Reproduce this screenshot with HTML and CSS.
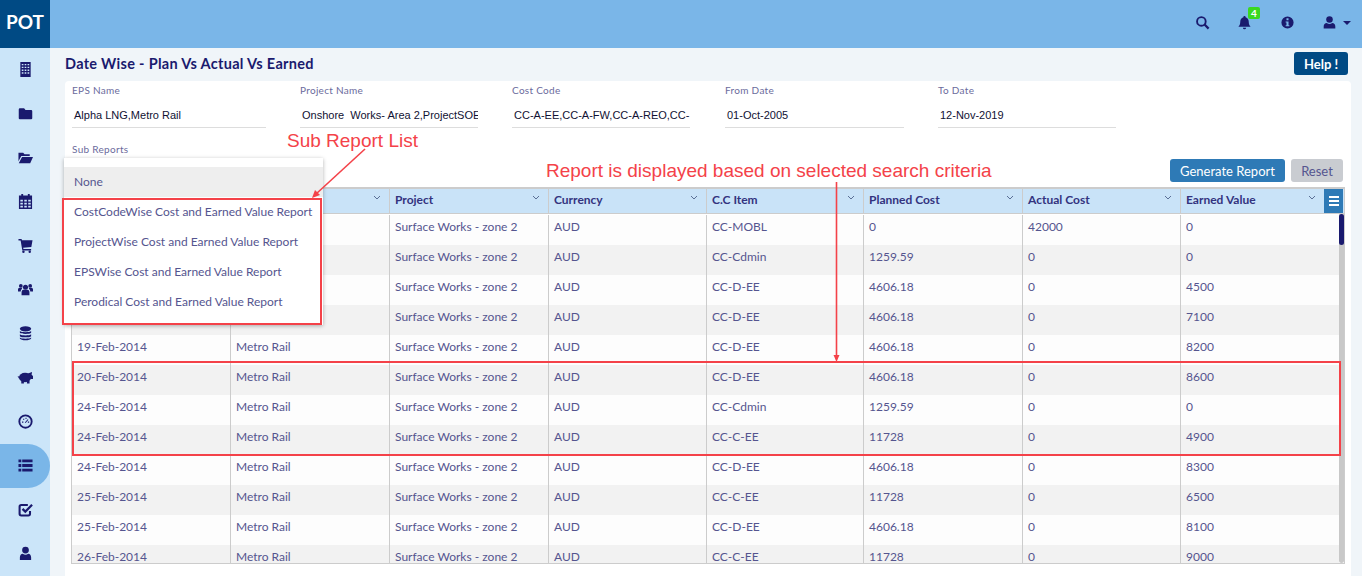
FILE: index.html
```html
<!DOCTYPE html>
<html>

<head>
    <meta charset="utf-8">
    <title>Date Wise - Plan Vs Actual Vs Earned</title>
    <link rel="stylesheet" href="styles.css">
</head>

<body>

    <svg class="sprite" width="0" height="0">
        <symbol id="i-chev" viewBox="0 0 8 5"><path d="M1 1l3 3 3-3" fill="none" stroke="#5a6f96" stroke-width="1"/></symbol>
    </svg>

    <header class="topbar">
        <div class="logo">POT</div>
        <div class="top-icons">
            <svg class="top-icon" viewBox="0 0 16 16"><circle cx="6.8" cy="6.8" r="4.6" fill="none" stroke="#1a1a6e" stroke-width="2"/><path d="M10.2 10.2l4.3 4.3" stroke="#1a1a6e" stroke-width="2.4"/></svg>
            <div class="bell">
                <svg class="top-icon" viewBox="0 0 16 16"><path d="M8 1a1.2 1.2 0 0 1 1.2 1.3C11.500 2.900 12.500 4.800 12.500 7c0 3 .8 4.300 2 5.500H1.500c1.200-1.200 2-2.500 2-5.500 0-2.200 1-4.100 3.300-4.700A1.200 1.200 0 0 1 8 1zM6.300 13.500h3.400a1.700 1.700 0 0 1-3.400 0z" fill="#1a1a6e"/></svg>
                <span class="badge">4</span>
            </div>
            <svg class="top-icon" viewBox="0 0 16 16"><path fill-rule="evenodd" d="M8 1.500a6.500 6.500 0 1 1 0 13 6.500 6.500 0 0 1 0-13zM6.900 3.500v2.100h2.200V3.500zM6 6.800v1.300h.9v2.700H6v1.300h4v-1.300h-.9V6.800z" fill="#1a1a6e"/></svg>
            <div class="user-menu">
                <svg class="top-icon" viewBox="0 0 16 16"><circle cx="8" cy="4.800" r="3.500" fill="#1a1a6e"/><path d="M1.800 14.500v-2.300c0-2.200 1.400-3.700 3.300-3.700.8.600 1.800 1 2.900 1s2.100-.4 2.900-1c1.900 0 3.300 1.500 3.300 3.700v2.300z" fill="#1a1a6e"/></svg>
                <span class="caret"></span>
            </div>
        </div>
    </header>

    <div class="layout">

        <nav class="sidebar">
            <a class="nav-item"><svg viewBox="0 0 16 16"><path fill-rule="evenodd" d="M2.500 0h11v16h-11zM4 2v1.500h1.800V2zM7.100 2v1.500h1.800V2zM10.200 2v1.500H12V2zM4 5v1.500h1.800V5zM7.100 5v1.500h1.800V5zM10.200 5v1.500H12V5zM4 8v1.500h1.800V8zM7.100 8v1.500h1.800V8zM10.200 8v1.500H12V8zM4 11v1.500h1.800V11zM7.100 11v1.500h1.800V11zM10.200 11v1.500H12V11z"/></svg></a>
            <a class="nav-item"><svg viewBox="0 0 16 16"><path d="M2 2.500h4.500L8 4.300H14a1.200 1.200 0 0 1 1.200 1.200V13a1.200 1.200 0 0 1-1.200 1.200H2A1.200 1.200 0 0 1 .8 13V3.700A1.200 1.200 0 0 1 2 2.500z"/></svg></a>
            <a class="nav-item"><svg viewBox="0 0 16 16"><path d="M.5 3h5L7 4.500h5.500V6.500H3.500L.5 12zM4.300 7.500H16L13 14H.8z"/></svg></a>
            <a class="nav-item"><svg viewBox="0 0 16 16"><path fill-rule="evenodd" d="M3.500 0h2v1.500h5V0h2v1.500H15V16H1V1.500h2.500zM2.500 6v2h2.700V6zM6.700 6v2h2.700V6zM10.900 6v2h2.700V6zM2.500 9.200v2h2.700v-2zM6.700 9.200v2h2.700v-2zM10.900 9.200v2h2.700v-2zM2.500 12.400v2h2.700v-2zM6.700 12.400v2h2.700v-2zM10.900 12.400v2h2.700v-2z"/></svg></a>
            <a class="nav-item"><svg viewBox="0 0 16 16"><path d="M.5 1h3.300l.4 1.500H15.500l-1.300 7-8.700.8.300 1.300H14V13.200H4.600L2.800 2.700H.5z"/><circle cx="5.800" cy="14.700" r="1.300"/><circle cx="12.500" cy="14.700" r="1.300"/></svg></a>
            <a class="nav-item"><svg viewBox="0 0 16 16"><circle cx="8" cy="5.500" r="2.700"/><circle cx="3" cy="4.200" r="2"/><circle cx="13" cy="4.200" r="2"/><path d="M3.800 14v-3c0-2 1.200-2.800 2-2.800h4.400c.8 0 2 .8 2 2.800v3zM0 10V8C0 7 .8 6.500 1.700 6.500h2.400l.3.700C3.500 8 2.900 9 2.900 10zM16 10V8c0-1-.8-1.500-1.700-1.500h-2.400l-.3.700c.9.800 1.500 1.800 1.500 2.800z"/></svg></a>
            <a class="nav-item"><svg viewBox="0 0 16 16"><ellipse cx="8" cy="3" rx="6" ry="2.800"/><path d="M2 5.300C3 7 13 7 14 5.300V7.300C13 9 3 9 2 7.300zM2 8.800C3 10.500 13 10.500 14 8.800V10.800C13 12.500 3 12.500 2 10.800zM2 12.200C3 13.900 13 13.900 14 12.200V13.200C13 15.800 3 15.800 2 13.200z"/></svg></a>
            <a class="nav-item"><svg viewBox="0 0 16 16"><ellipse cx="7.500" cy="8" rx="6.500" ry="5"/><path d="M-.5 6.500l2.800 1-1 2zM3.500 11h2.800v3.500H3.500zM9.500 11h2.800v3.500H9.500zM10.500 3.800l4.500-1.800-.5 3 1.500 1.500v3h-2.500z"/></svg></a>
            <a class="nav-item"><svg viewBox="0 0 16 16"><circle cx="8" cy="8" r="6.600" fill="none" stroke="#1a1a6e" stroke-width="2"/><path d="M7.300 9l3-3.500.8.700-3 3.500zM4.300 8h1.400v1.200H4.300zM5.400 5h1.300v1.200H5.400zM8 4h1.100v1.200H8zM10.500 8h1.400v1.200h-1.400z"/></svg></a>
            <a class="nav-item nav-active"><svg viewBox="0 0 16 16"><path d="M.5 1.500h3v3h-3zM4.500 1.500h11v3h-11zM.5 6.500h3v3h-3zM4.500 6.500h11v3h-11zM.5 11.500h3v3h-3zM4.500 11.500h11v3h-11z"/></svg></a>
            <a class="nav-item"><svg viewBox="0 0 16 16"><path d="M12.800 9.500V12.500a1.800 1.800 0 0 1-1.800 1.800H3.500A1.800 1.800 0 0 1 1.700 12.500V5A1.800 1.800 0 0 1 3.500 3.200h7" fill="none" stroke="#1a1a6e" stroke-width="2.200"/><path d="M4.800 7.300l3 3L15 3" fill="none" stroke="#1a1a6e" stroke-width="2.400"/></svg></a>
            <a class="nav-item"><svg viewBox="0 0 16 16"><circle cx="8" cy="4.300" r="3.600"/><path d="M2 15v-2.800c0-2.200 1.300-3.900 3.100-3.900.8.600 1.800 1 2.900 1s2.100-.4 2.900-1c1.800 0 3.100 1.700 3.100 3.900V15z"/></svg></a>
        </nav>

        <main class="content">

            <div class="title-row">
                <h1>Date Wise - Plan Vs Actual Vs Earned</h1>
                <button type="button" class="btn btn-help">Help !</button>
            </div>

            <section class="card">

                <div class="filters">
                    <div class="field field-eps"><label>EPS Name</label><div class="value">Alpha LNG,Metro Rail</div></div>
                    <div class="field"><label>Project Name</label><div class="value">Onshore  Works- Area 2,ProjectSOE</div></div>
                    <div class="field"><label>Cost Code</label><div class="value">CC-A-EE,CC-A-FW,CC-A-REO,CC-</div></div>
                    <div class="field field-from"><label>From Date</label><div class="value">01-Oct-2005</div></div>
                    <div class="field"><label>To Date</label><div class="value">12-Nov-2019</div></div>
                </div>

                <div class="sub-label">Sub Reports</div>

                <div class="actions">
                    <button type="button" class="btn btn-generate">Generate Report</button>
                    <button type="button" class="btn btn-reset">Reset</button>
                </div>

                <div class="grid">
                    <div class="grid-head">
                        <div class="hcell">Date<svg class="chev"><use href="#i-chev"/></svg></div>
                        <div class="hcell">EPS<svg class="chev"><use href="#i-chev"/></svg></div>
                        <div class="hcell">Project<svg class="chev"><use href="#i-chev"/></svg></div>
                        <div class="hcell">Currency<svg class="chev"><use href="#i-chev"/></svg></div>
                        <div class="hcell">C.C Item<svg class="chev"><use href="#i-chev"/></svg></div>
                        <div class="hcell">Planned Cost<svg class="chev"><use href="#i-chev"/></svg></div>
                        <div class="hcell">Actual Cost<svg class="chev"><use href="#i-chev"/></svg></div>
                        <div class="hcell hcell-last">Earned Value<svg class="chev"><use href="#i-chev"/></svg></div>
                        <div class="grid-menu"><span></span><span></span><span></span></div>
                    </div>
                    <div class="grid-body">
                        <div class="rows">
                            <div class="row"><div>15-Feb-2014</div><div>Metro Rail</div><div>Surface Works - zone 2</div><div>AUD</div><div>CC-MOBL</div><div>0</div><div>42000</div><div>0</div></div>
                            <div class="row"><div>17-Feb-2014</div><div>Metro Rail</div><div>Surface Works - zone 2</div><div>AUD</div><div>CC-Cdmin</div><div>1259.59</div><div>0</div><div>0</div></div>
                            <div class="row"><div>17-Feb-2014</div><div>Metro Rail</div><div>Surface Works - zone 2</div><div>AUD</div><div>CC-D-EE</div><div>4606.18</div><div>0</div><div>4500</div></div>
                            <div class="row"><div>18-Feb-2014</div><div>Metro Rail</div><div>Surface Works - zone 2</div><div>AUD</div><div>CC-D-EE</div><div>4606.18</div><div>0</div><div>7100</div></div>
                            <div class="row"><div>19-Feb-2014</div><div>Metro Rail</div><div>Surface Works - zone 2</div><div>AUD</div><div>CC-D-EE</div><div>4606.18</div><div>0</div><div>8200</div></div>
                            <div class="row"><div>20-Feb-2014</div><div>Metro Rail</div><div>Surface Works - zone 2</div><div>AUD</div><div>CC-D-EE</div><div>4606.18</div><div>0</div><div>8600</div></div>
                            <div class="row"><div>24-Feb-2014</div><div>Metro Rail</div><div>Surface Works - zone 2</div><div>AUD</div><div>CC-Cdmin</div><div>1259.59</div><div>0</div><div>0</div></div>
                            <div class="row"><div>24-Feb-2014</div><div>Metro Rail</div><div>Surface Works - zone 2</div><div>AUD</div><div>CC-C-EE</div><div>11728</div><div>0</div><div>4900</div></div>
                            <div class="row"><div>24-Feb-2014</div><div>Metro Rail</div><div>Surface Works - zone 2</div><div>AUD</div><div>CC-D-EE</div><div>4606.18</div><div>0</div><div>8300</div></div>
                            <div class="row"><div>25-Feb-2014</div><div>Metro Rail</div><div>Surface Works - zone 2</div><div>AUD</div><div>CC-C-EE</div><div>11728</div><div>0</div><div>6500</div></div>
                            <div class="row"><div>25-Feb-2014</div><div>Metro Rail</div><div>Surface Works - zone 2</div><div>AUD</div><div>CC-D-EE</div><div>4606.18</div><div>0</div><div>8100</div></div>
                            <div class="row"><div>26-Feb-2014</div><div>Metro Rail</div><div>Surface Works - zone 2</div><div>AUD</div><div>CC-C-EE</div><div>11728</div><div>0</div><div>9000</div></div>
                        </div>
                        <div class="scrollbar"><div class="thumb"></div></div>
                    </div>
                </div>

            </section>
        </main>
    </div>

    <!-- dropdown that is open over the table -->
    <div class="dropdown">
        <div class="opt opt-none">None</div>
        <div class="opt">CostCodeWise Cost and Earned Value Report</div>
        <div class="opt">ProjectWise Cost and Earned Value Report</div>
        <div class="opt">EPSWise Cost and Earned Value Report</div>
        <div class="opt">Perodical Cost and Earned Value Report</div>
    </div>

    <!-- red annotations drawn on top of the screenshot -->
    <div class="note note-list">Sub Report List</div>
    <div class="note note-report">Report is displayed based on selected search criteria</div>
    <div class="mark mark-list"></div>
    <div class="mark mark-rows"></div>
    <svg class="arrows" width="1362" height="576" viewBox="0 0 1362 576">
        <path d="M365 149L316 194" stroke="#f44249" stroke-width="1.600" fill="none"/>
        <path d="M312 198l3-8 5 5z" fill="#f44249"/>
        <path d="M836.500 182V358" stroke="#f44249" stroke-width="1.600" fill="none"/>
        <path d="M836.500 362l-3-7h6z" fill="#f44249"/>
    </svg>

</body>

</html>
```

FILE: styles.css
```css
* {
    box-sizing: border-box;
}

html, body {
    height: 576px;
    margin: 0;
    overflow: hidden;
}

body {
    font-family: 'Lato', sans-serif;
    color: #55558f;
    background-color: #f0f5f9;
    position: relative;
}

.sprite {
    position: absolute;
}

/* top bar */
.topbar {
    height: 48px;
    background-color: #7ab6e8;
    display: flex;
    justify-content: space-between;
}

.logo {
    width: 50px;
    background-color: #004a84;
    color: #ffffff;
    font-size: 19px;
    font-weight: bold;
    text-align: center;
    line-height: 44px;
}

.top-icons {
    display: flex;
    align-items: center;
    gap: 27.500px;
    padding-right: 11px;
    padding-bottom: 3px;
}

.top-icon {
    width: 15px;
    height: 15px;
    display: block;
}

.bell {
    position: relative;
}

.badge {
    position: absolute;
    left: 11px;
    top: -8px;
    width: 12px;
    height: 12px;
    background-color: #39d81f;
    border-radius: 2px;
    color: #ffffff;
    font-size: 10px;
    font-weight: bold;
    line-height: 12px;
    text-align: center;
}

.user-menu {
    display: flex;
    align-items: center;
    gap: 6px;
}

.caret {
    width: 0;
    height: 0;
    border-left: 4px solid transparent;
    border-right: 4px solid transparent;
    border-top: 4px solid #1a1a6e;
}

/* page */
.layout {
    display: flex;
    height: 528px;
}

.sidebar {
    width: 50px;
    flex: none;
    background-color: #cbe5f9;
}

.nav-item {
    height: 44px;
    padding-bottom: 2px;
    display: flex;
    align-items: center;
    justify-content: center;
}

.nav-item svg {
    width: 15px;
    height: 15px;
    fill: #1a1a6e;
    overflow: visible;
}

.nav-active {
    background-color: #7ab6e8;
    border-radius: 0 22px 22px 0;
}

.content {
    flex: 1;
    min-width: 0;
    padding: 4px 11px 0 15px;
    display: flex;
    flex-direction: column;
}

.title-row {
    height: 29px;
    display: flex;
    justify-content: space-between;
    align-items: flex-start;
    padding-right: 3px;
}

h1 {
    margin: 0;
    font-size: 14.500px;
    line-height: 24px;
    color: #1a1a6e;
    letter-spacing: 0.3px;
}

.btn {
    border: none;
    border-radius: 3px;
    font-family: 'Lato', sans-serif;
    font-size: 13px;
    height: 23px;
    padding: 0;
}

.btn-help {
    width: 54px;
    background-color: #004a84;
    color: #ffffff;
    font-weight: bold;
}

.card {
    flex: 1;
    background-color: #ffffff;
    border-radius: 4px 4px 0 0;
    padding: 3px 6px 0 6px;
}

.filters {
    display: flex;
    gap: 34px;
    height: 44px;
}

.field {
    width: 178px;
}

.field-eps {
    width: 194px;
    margin-left: 1px;
}

.field-from {
    width: 179px;
    margin-left: 1px;
}

.field label {
    display: block;
    font-size: 10px;
    letter-spacing: 0.3px;
    line-height: 13px;
    color: #6b6b9c;
}

.value {
    margin-top: 9px;
    height: 22px;
    font-family: 'Liberation Sans', sans-serif;
    font-size: 11px;
    line-height: 19px;
    padding-left: 2px;
    color: #111133;
    white-space: pre;
    overflow: hidden;
    border-bottom: 1px solid #dddddd;
}

.sub-label {
    margin-top: 15px;
    margin-left: 1px;
    font-size: 10px;
    letter-spacing: 0.3px;
    line-height: 13px;
    color: #6b6b9c;
}

.actions {
    display: flex;
    justify-content: flex-end;
    gap: 6px;
    margin-top: 3px;
    padding-right: 2px;
    height: 23px;
}

.btn-generate {
    width: 115px;
    background-color: #2e7ab6;
    color: #ffffff;
}

.btn-reset {
    width: 52px;
    background-color: #c9ccd1;
    color: #55558f;
}

/* table */
.grid {
    margin-top: 5px;
    height: 377px;
    width: 1274px;
    border: 1px solid #cccccc;
    display: flex;
    flex-direction: column;
    font-size: 12px;
}

.grid-head {
    height: 26px;
    flex: none;
    display: grid;
    grid-template-columns: 159px 159px 159px 158px 157px 159px 158px 143px 19px;
    background-color: #c9e3f8;
    border-bottom: 1px solid #cccccc;
    border-top: 1px solid #cccccc;
}

.hcell {
    position: relative;
    font-weight: bold;
    color: #33337f;
    padding-left: 5px;
    line-height: 22px;
    border-right: 1px solid #cccccc;
}

.hcell-last {
    border-right: none;
}

.chev {
    position: absolute;
    right: 8px;
    top: 6px;
    width: 8px;
    height: 5px;
}

.grid-menu {
    background-color: #2e7ab6;
    display: flex;
    flex-direction: column;
    justify-content: center;
    align-items: center;
    gap: 2px;
}

.grid-menu span {
    width: 10px;
    height: 2px;
    background-color: #ffffff;
}

.grid-body {
    flex: 1;
    min-height: 0;
    display: flex;
}

.rows {
    flex: 1;
    min-width: 0;
    overflow: hidden;
    padding-top: 1px;
}

.row {
    height: 30px;
    display: grid;
    grid-template-columns: 159px 159px 159px 158px 157px 159px 158px 1fr;
    background-color: #fdfdfd;
}

.row:nth-child(even) {
    background-color: #f2f2f2;
}

.row div {
    padding-left: 5px;
    line-height: 23px;
    border-right: 1px solid #cccccc;
}

.row div:last-child {
    border-right: none;
}

.scrollbar {
    width: 5px;
    flex: none;
    background-color: #c8c8c8;
    border-radius: 0 0 3px 3px;
}

.thumb {
    height: 31px;
    background-color: #1a1a6e;
    border-radius: 3px;
}

/* open dropdown */
.dropdown {
    position: absolute;
    left: 64px;
    top: 158px;
    width: 259px;
    height: 167px;
    padding-top: 9px;
    background-color: #ffffff;
    box-shadow: 0 1px 4px rgba(0, 0, 0, 0.3);
    font-size: 12px;
}

.opt {
    height: 30px;
    line-height: 30px;
    padding-left: 10px;
    white-space: nowrap;
}

.opt-none {
    background-color: #eeeeee;
}

/* annotations */
.note {
    position: absolute;
    font-family: 'Liberation Sans', sans-serif;
    font-size: 19px;
    line-height: 22px;
    color: #f44249;
    white-space: nowrap;
}

.note-list {
    left: 287px;
    top: 130px;
}

.note-report {
    left: 546px;
    top: 160px;
}

.mark {
    position: absolute;
    border: 2px solid #f44249;
}

.mark-list {
    left: 62px;
    top: 198px;
    width: 260px;
    height: 127px;
}

.mark-rows {
    left: 72px;
    top: 361px;
    width: 1269px;
    height: 95px;
}

.arrows {
    position: absolute;
    left: 0;
    top: 0;
    pointer-events: none;
}
```
